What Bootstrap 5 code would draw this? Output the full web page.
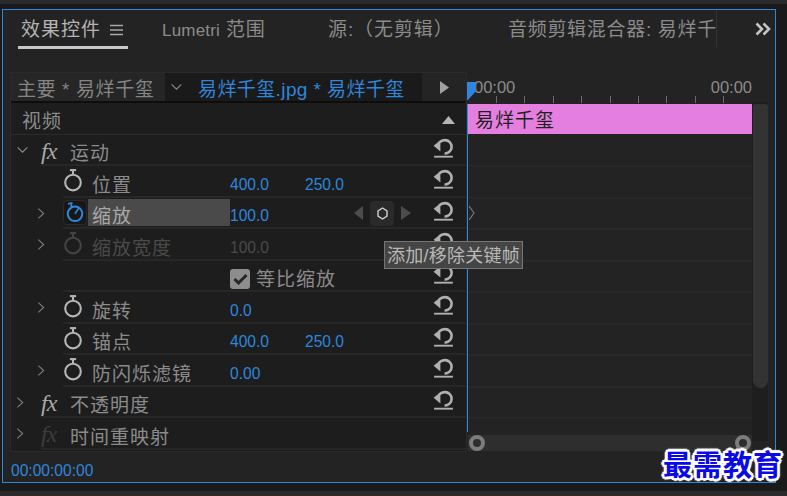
<!DOCTYPE html>
<html lang="zh">
<head>
<meta charset="utf-8">
<title>效果控件</title>
<link href="https://cdn.jsdelivr.net/npm/bootstrap@5.3.0/dist/css/bootstrap.min.css" rel="stylesheet">
<style>
html,body{height:496px;overflow:hidden}
body{background:#1a1a1a;font-family:"Liberation Sans","Noto Sans CJK SC",sans-serif;color:#8b8b8b;font-size:19px;line-height:1}
.strip-top{height:4px;background:#2a2a2a}
.strip-gap{height:5px}
.strip-bot{height:5px;background:#2a2a2a;margin-top:8px}
.frame{width:774px;height:474px;margin-left:2px;border:1px solid #2f86dc;background:#232323;position:relative}
.tabbar{height:62px;padding-left:15px;position:relative}
.ptab{padding:10px 0 0;height:39px;white-space:nowrap}
.ptab-on{width:110px;border-bottom:3px solid #c8c8c8;padding-left:3px;color:#b4b4b4;letter-spacing:1px;gap:9px}
.t2{margin-left:34px;width:166px;font-size:17px;letter-spacing:.2px}
.t2cjk{font-size:19px;letter-spacing:.8px;margin-left:1px}
.t3{width:180px;letter-spacing:.9px}
.t4{width:209px;border-right:1px solid #333;height:37px;letter-spacing:.7px}
.more{margin-left:38px;margin-top:12px}
.work{padding-left:7px}
.leftcol{width:457px;height:380px;background:#1d1d1d;border:1px solid #2b2b2b}
.subhead{height:30px;border-bottom:2px solid #0d0d0d}
.master{width:154px;background:#262626;padding:4px 0 0 6px;letter-spacing:.6px;color:#858585}
.seq{width:257px;background:#1a1a1a;color:#2f86dc;padding-top:4px;letter-spacing:.4px;white-space:nowrap;overflow:hidden}
.seq svg{margin:-4px 15px 0 5px;flex:none}
.arrowcell{flex:1;background:#242424}
.prow{height:31.5px}
.vhead{padding:0 11px 0 11px;border-bottom:1px solid #2b2b2b;letter-spacing:1px}
.vtxt{padding-top:7px}
.vtri{margin-top:3px}
.gut{width:52px;flex:none;padding-left:26px}
.gutfx{width:30px;flex:none;padding-left:5px}
.rbody{flex:1;min-width:0;border-bottom:2px solid #272727;padding-right:12px}
.fxmark{font-family:"Liberation Serif",serif;font-style:italic;font-size:24px;color:#a8a8a8;width:29px;letter-spacing:-1px;padding-top:3px}
.fxoff{color:#3c3c3c}
.lbl{letter-spacing:1px;padding-top:9px}
.watch{width:24px;height:25px;flex:none;margin:0 3px 0 -2px}
.watch-on{border:1px solid #2b2b2b;border-radius:4px;background:#171717;margin:0 1px 0 0}
.watch-on svg{margin-left:-1px}
.pname{width:142px;padding:8px 0 0 4px;height:27px;margin-top:1px;flex:none;letter-spacing:1px}
.pname-on{background:#4a4a4a;color:#a8a8a8}
.v1{width:75px;flex:none;color:#2f86dc;font-size:15.6px;padding-top:8px}
.v2{flex:none;color:#2f86dc;font-size:15.6px;padding-top:8px}
.v1-s{padding-top:7px}
.dim{color:#4a4a4a}
.reset{width:21px;height:25px;margin-left:auto;flex:none;color:#b0b0b0}
.reset-s{margin-left:0}
.kfs{margin-left:auto;margin-right:22px;gap:7px;padding-top:2px}
.kbox{width:24px;height:25px;background:#2a2a2a;border-radius:4px}
.chk{width:20px;height:20px;background:#8d8d8d;border-radius:3px;margin:7px 6px 0 0}
.rightcol{width:285px;height:380px;position:relative}
.ruler{height:32px;position:relative;color:#8b8b8b;font-size:16.5px;padding:7px 0 0 7px}
.ticks{position:absolute;left:29px;right:0;bottom:1px;height:7px;background:repeating-linear-gradient(90deg,#6a6a6a 0 1px,transparent 1px 28.4px)}
.lanes{height:331px;overflow:hidden}
.clip{height:30px;background:#e47fe0;color:#222;padding:3px 0 0 7px;letter-spacing:1px;margin-left:1px}
.lane{height:31.5px;border-bottom:2px solid #282828}
.lanetop{height:1.5px}
.lanechev{margin-left:2px}
.hbar{height:16px;background:#2e2e2e;position:relative;margin-left:1px}
.knob{position:absolute;top:0;width:16px;height:16px;border:4px solid #7d7d7d;border-radius:50%;background:#2e2e2e}
.knob-a{left:1px}
.knob-b{right:1px}
.playline{position:absolute;left:0;top:32px;width:1px;height:328px;background:#2f86dc}
.playhead{position:absolute;left:0;top:10px}
.vbar{width:16px;height:339px;background:#1e1e1e;margin-top:30px;flex:none}
.vthumb{height:284px;background:#333;margin:2px 0 0 1px;border-radius:3px 3px 8px 8px}
.foot{color:#2f86dc;font-size:15.6px;padding:11px 0 0 8px}
.tip{position:absolute;left:381px;top:231px;width:139px;height:28px;background:#454545;border:1px solid #757575;color:#b9b9b9;font-size:18px;letter-spacing:.25px;white-space:nowrap;padding:2px 0 0 2px;z-index:5}
.stamp{position:absolute;left:660px;top:439px;font-family:"Noto Sans CJK SC",sans-serif;font-weight:700;font-size:29px;letter-spacing:1px;color:#0a0ae6;white-space:nowrap;z-index:6;text-shadow:2px 0 0 #fff,-2px 0 0 #fff,0 2px 0 #fff,0 -2px 0 #fff,2px 2px 0 #fff,-2px 2px 0 #fff,2px -2px 0 #fff,-2px -2px 0 #fff,3px 0 1px #fff,-3px 0 1px #fff,0 3px 1px #fff,0 -3px 1px #fff}
</style>
</head>
<body>
<svg width="0" height="0" class="d-block position-absolute">
<symbol id="chev" viewBox="0 0 9 14"><path d="M1.5 1.5 7.5 7 1.5 12.5" fill="none" stroke="#808080" stroke-width="1.2"/></symbol>
<symbol id="down" viewBox="0 0 14 9"><path d="M1.5 1.5 7 7 12.5 1.5" fill="none" stroke="#8a8a8a" stroke-width="1.2"/></symbol>
<symbol id="watch" viewBox="0 0 20 24"><rect x="7" y="1" width="6" height="2" fill="currentColor"/><rect x="9" y="2" width="2" height="4" fill="currentColor"/><circle cx="10" cy="14" r="7.5" fill="none" stroke="currentColor" stroke-width="2"/></symbol>
<symbol id="watchon" viewBox="0 0 22 24"><path d="M3 2 8 1 8.5 3 3.5 4Z" fill="currentColor"/><rect x="6" y="3" width="2" height="4" fill="currentColor"/><circle cx="11" cy="14" r="8" fill="none" stroke="currentColor" stroke-width="2.2"/><path d="M11 14 15 8" stroke="currentColor" stroke-width="1.8"/></symbol>
<symbol id="reset" viewBox="0 0 20 24"><path d="M0.500 8.500 7 3V14Z" fill="currentColor"/><path d="M6 5.200A7.400 7.400 0 0 1 11.500 3 6.400 6.400 0 0 1 17.800 9.400A6.400 6.400 0 0 1 11 15.800" fill="none" stroke="currentColor" stroke-width="2.500"/><rect x="1" y="18" width="18" height="1.800" fill="currentColor"/></symbol>
</svg>

<div class="strip-top"></div><div class="strip-gap"></div>
<div class="frame">
  <div class="tabbar d-flex">
    <div class="ptab ptab-on d-flex">效果控件
      <svg width="13" height="12" viewBox="0 0 13 12" class="mt-1"><path d="M0 1.5H13M0 6H13M0 10.5H13" stroke="#a8a8a8" stroke-width="1.6"/></svg>
    </div>
    <div class="ptab t2">Lumetri <span class="t2cjk">范围</span></div>
    <div class="ptab t3">源:（无剪辑）</div>
    <div class="ptab t4">音频剪辑混合器: 易烊千</div>
    <svg class="more" width="16" height="14" viewBox="0 0 16 14"><path d="M1.5 1.5 7 7 1.5 12.500M8.500 1.500 14 7 8.500 12.500" fill="none" stroke="#c4c4c4" stroke-width="2.6"/></svg>
  </div>

  <div class="work d-flex">
    <div class="leftcol flex-none">
      <div class="subhead d-flex">
        <div class="master d-flex align-items-center">主要 * 易烊千玺</div>
        <div class="seq d-flex align-items-center"><svg width="13" height="8"><use href="#down"/></svg>易烊千玺.jpg * 易烊千玺</div>
        <div class="arrowcell d-flex align-items-center justify-content-center"><svg width="9" height="13" viewBox="0 0 9 13"><path d="M0 0 9 6.5 0 13Z" fill="#a0a0a0"/></svg></div>
      </div>

      <div class="prow vhead d-flex align-items-center justify-content-between"><span class="vtxt">视频</span>
        <svg class="vtri" width="13" height="8" viewBox="0 0 13 8"><path d="M6.5 0 13 8H0Z" fill="#b5b5b5"/></svg>
      </div>

      <div class="prow d-flex">
        <div class="gutfx d-flex align-items-center"><svg width="13" height="8"><use href="#down"/></svg></div>
        <div class="rbody d-flex align-items-center"><span class="fxmark">fx</span><span class="lbl">运动</span>
          <svg class="reset"><use href="#reset"/></svg></div>
      </div>

      <div class="prow d-flex">
        <div class="gut"></div>
        <div class="rbody d-flex align-items-center">
          <svg class="watch"><use href="#watch" color="#b5b5b5"/></svg>
          <span class="pname">位置</span><span class="v1">400.0</span><span class="v2">250.0</span>
          <svg class="reset"><use href="#reset"/></svg></div>
      </div>

      <div class="prow d-flex">
        <div class="gut d-flex align-items-center"><svg width="8" height="13"><use href="#chev"/></svg></div>
        <div class="rbody d-flex align-items-center">
          <div class="watch watch-on d-flex align-items-center justify-content-center"><svg width="20" height="22"><use href="#watchon" color="#2f86dc"/></svg></div>
          <span class="pname pname-on">缩放</span><span class="v1 v1-s">100.0</span>
          <div class="kfs d-flex align-items-center">
            <svg width="9" height="14" viewBox="0 0 9 14"><path d="M9 0 0 7 9 14Z" fill="#4c4c4c"/></svg>
            <div class="kbox d-flex align-items-center justify-content-center"><svg width="11" height="13" viewBox="0 0 11 13"><path d="M5.500 1 10 3.800V9.200L5.500 12 1 9.200V3.800Z" fill="none" stroke="#d0d0d0" stroke-width="1.400"/></svg></div>
            <svg width="10" height="14" viewBox="0 0 10 14"><path d="M0 0 10 7 0 14Z" fill="#4c4c4c"/></svg>
          </div>
          <svg class="reset reset-s"><use href="#reset"/></svg></div>
      </div>

      <div class="prow d-flex">
        <div class="gut d-flex align-items-center"><svg width="8" height="13"><use href="#chev"/></svg></div>
        <div class="rbody d-flex align-items-center">
          <svg class="watch"><use href="#watch" color="#444"/></svg>
          <span class="pname dim">缩放宽度</span><span class="v1 dim">100.0</span>
          <svg class="reset"><use href="#reset"/></svg></div>
      </div>

      <div class="prow d-flex">
        <div class="gut"></div>
        <div class="rbody d-flex align-items-center">
          <div class="watch"></div><div class="pname"></div>
          <div class="chk d-flex align-items-center justify-content-center"><svg width="15" height="12" viewBox="0 0 15 12"><path d="M1.500 6 5.500 10 13.500 2" fill="none" stroke="#262626" stroke-width="3"/></svg></div>
          <span class="lbl">等比缩放</span>
          <svg class="reset"><use href="#reset"/></svg></div>
      </div>

      <div class="prow d-flex">
        <div class="gut d-flex align-items-center"><svg width="8" height="13"><use href="#chev"/></svg></div>
        <div class="rbody d-flex align-items-center">
          <svg class="watch"><use href="#watch" color="#b5b5b5"/></svg>
          <span class="pname">旋转</span><span class="v1">0.0</span>
          <svg class="reset"><use href="#reset"/></svg></div>
      </div>

      <div class="prow d-flex">
        <div class="gut"></div>
        <div class="rbody d-flex align-items-center">
          <svg class="watch"><use href="#watch" color="#b5b5b5"/></svg>
          <span class="pname">锚点</span><span class="v1">400.0</span><span class="v2">250.0</span>
          <svg class="reset"><use href="#reset"/></svg></div>
      </div>

      <div class="prow d-flex">
        <div class="gut d-flex align-items-center"><svg width="8" height="13"><use href="#chev"/></svg></div>
        <div class="rbody d-flex align-items-center">
          <svg class="watch"><use href="#watch" color="#b5b5b5"/></svg>
          <span class="pname">防闪烁滤镜</span><span class="v1">0.00</span>
          <svg class="reset"><use href="#reset"/></svg></div>
      </div>

      <div class="prow d-flex">
        <div class="gutfx d-flex align-items-center"><svg width="8" height="13"><use href="#chev"/></svg></div>
        <div class="rbody d-flex align-items-center"><span class="fxmark">fx</span><span class="lbl">不透明度</span>
          <svg class="reset"><use href="#reset"/></svg></div>
      </div>

      <div class="prow d-flex">
        <div class="gutfx d-flex align-items-center"><svg width="8" height="13"><use href="#chev"/></svg></div>
        <div class="rbody d-flex align-items-center"><span class="fxmark fxoff">fx</span><span class="lbl">时间重映射</span></div>
      </div>
    </div>

    <div class="rightcol flex-none">
      <div class="ruler d-flex justify-content-between"><span>00:00</span><span>00:00</span><div class="ticks"></div></div>
      <div class="lanes">
        <div class="clip d-flex align-items-center">易烊千玺</div>
        <div class="lanetop"></div>
        <div class="lane"></div>
        <div class="lane"></div>
        <div class="lane d-flex align-items-center"><svg class="lanechev" width="6" height="14" viewBox="0 0 6 14"><path d="M0 0 5 7 0 14" fill="none" stroke="#777" stroke-width="1.2"/></svg></div>
        <div class="lane"></div>
        <div class="lane"></div>
        <div class="lane"></div>
        <div class="lane"></div>
        <div class="lane"></div>
        <div class="lane"></div>
      </div>
      <div class="hbar"><div class="knob knob-a"></div><div class="knob knob-b"></div></div>
      <div class="playline"></div>
      <svg class="playhead" width="10" height="19" viewBox="0 0 10 19"><path d="M0 0H9V9L1 18H0Z" fill="#2f86dc"/></svg>
    </div>

    <div class="vbar"><div class="vthumb"></div></div>
  </div>
  <div class="foot">00:00:00:00</div>
  <div class="tip d-flex align-items-center">添加/移除关键帧</div>
  <div class="stamp">最需教育</div>
</div>
<div class="strip-bot"></div>
</body>
</html>
